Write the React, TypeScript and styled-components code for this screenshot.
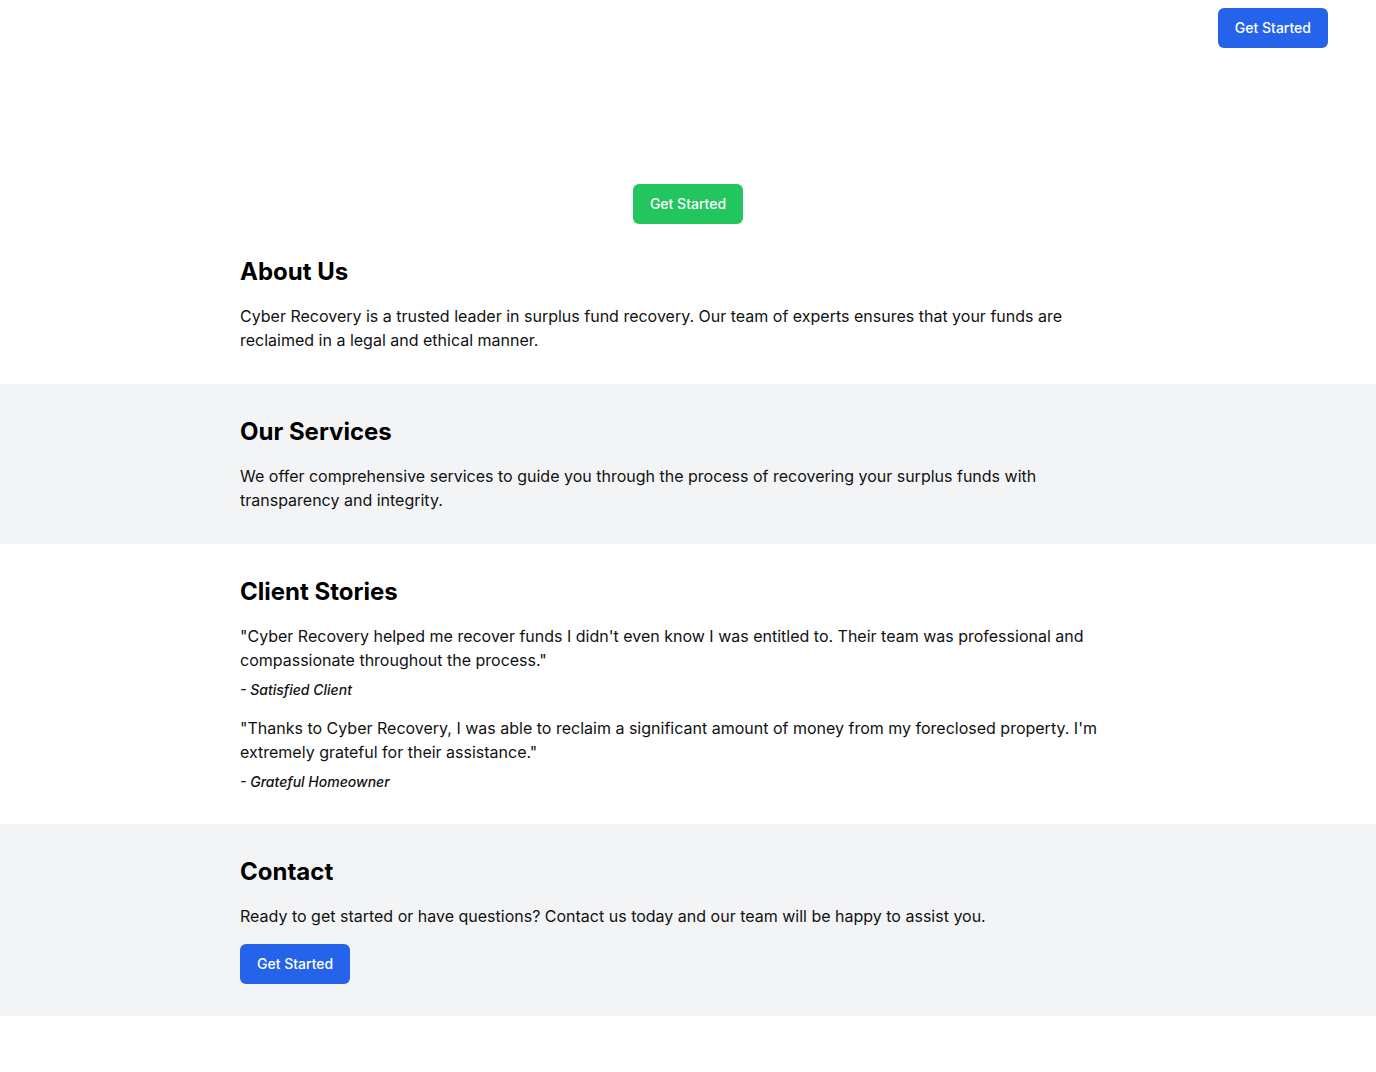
import styled, { createGlobalStyle } from "styled-components";

const GlobalStyle = createGlobalStyle`
  body {
    margin: 0;
    font-family: Inter, "Noto Sans", sans-serif;
    color: #111;
    background: #fff;
  }
`;

const Header = styled.header`
  display: flex;
  justify-content: flex-end;
  padding: 8px 48px;
`;

const Button = styled.button<{ $tone?: "blue" | "green" }>`
  display: inline-block;
  height: 40px;
  padding: 0 17px;
  border: none;
  border-radius: 6px;
  background: ${(p) => (p.$tone === "green" ? "#22c55e" : "#2563eb")};
  color: #fff;
  font-family: Inter, sans-serif;
  font-size: 14px;
  font-weight: 500;
  line-height: 20px;
  cursor: pointer;
`;

const Hero = styled.section`
  display: flex;
  justify-content: center;
  padding-top: 128px;
`;

const Section = styled.section<{ $muted?: boolean }>`
  background: ${(p) => (p.$muted ? "#f3f4f6" : "#fff")};
  padding: 32px 0;
`;

const Inner = styled.div`
  max-width: 896px;
  margin: 0 auto;
`;

const Heading = styled.h2`
  margin: 0 0 16px;
  font-size: 24px;
  line-height: 32px;
  font-weight: 700;
  color: #000;
`;

const Text = styled.p`
  margin: 0;
  font-size: 16px;
  line-height: 24px;
`;

const Story = styled.div`
  & + & {
    margin-top: 16px;
  }
`;

const Author = styled.p`
  margin: 8px 0 0;
  font-size: 14px;
  line-height: 20px;
  font-style: italic;
  font-weight: 500;
`;

const Actions = styled.div`
  margin-top: 16px;
`;

const stories = [
  {
    quote:
      "\"Cyber Recovery helped me recover funds I didn't even know I was entitled to. Their team was professional and compassionate throughout the process.\"",
    author: "- Satisfied Client",
  },
  {
    quote:
      "\"Thanks to Cyber Recovery, I was able to reclaim a significant amount of money from my foreclosed property. I'm extremely grateful for their assistance.\"",
    author: "- Grateful Homeowner",
  },
];

export default function App() {
  return (
    <>
      <GlobalStyle />
      <Header>
        <Button>Get Started</Button>
      </Header>
      <Hero>
        <Button $tone="green">Get Started</Button>
      </Hero>
      <Section>
        <Inner>
          <Heading>About Us</Heading>
          <Text>
            Cyber Recovery is a trusted leader in surplus fund recovery. Our team of experts
            ensures that your funds are reclaimed in a legal and ethical manner.
          </Text>
        </Inner>
      </Section>
      <Section $muted>
        <Inner>
          <Heading>Our Services</Heading>
          <Text>
            We offer comprehensive services to guide you through the process of recovering your
            surplus funds with transparency and integrity.
          </Text>
        </Inner>
      </Section>
      <Section>
        <Inner>
          <Heading>Client Stories</Heading>
          {stories.map((s) => (
            <Story key={s.author}>
              <Text>{s.quote}</Text>
              <Author>{s.author}</Author>
            </Story>
          ))}
        </Inner>
      </Section>
      <Section $muted>
        <Inner>
          <Heading>Contact</Heading>
          <Text>
            Ready to get started or have questions? Contact us today and our team will be happy to
            assist you.
          </Text>
          <Actions>
            <Button>Get Started</Button>
          </Actions>
        </Inner>
      </Section>
    </>
  );
}
